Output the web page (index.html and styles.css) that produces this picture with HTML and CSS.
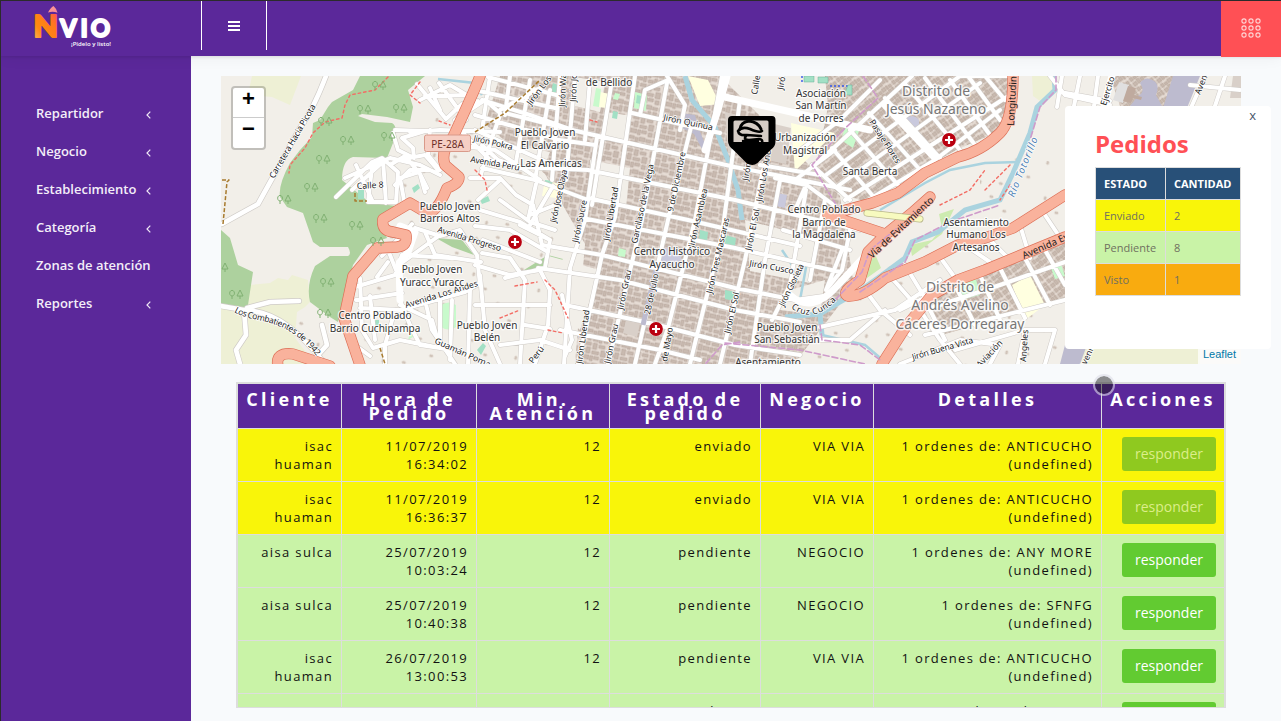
FILE: index.html
```html
<!DOCTYPE html>
<html lang="es">
<head>
<meta charset="utf-8">
<title>NVIO</title>
<link rel="stylesheet" href="styles.css">
</head>
<body>
<div class="app">
  <header class="topbar">
    <a class="brand">
      <svg class="logo" width="84" height="46" viewBox="32 4 84 46">
        <defs>
          <linearGradient id="ng" x1="0" y1="1" x2="1" y2="0"><stop offset="0" stop-color="#ffb56b"/><stop offset=".3" stop-color="#ff8a10"/><stop offset=".65" stop-color="#ff7a1c"/><stop offset="1" stop-color="#f9476b"/></linearGradient>
          <linearGradient id="ag" x1="0" y1="0" x2="1" y2="1"><stop offset="0" stop-color="#ff9a8c"/><stop offset="1" stop-color="#f5899f"/></linearGradient>
        </defs>
        <path d="M48 12.500Q50.500 7.500 53.500 6Q56.500 8.500 57.500 12.800Q53 10.800 48 12.500Z" fill="url(#ag)"/>
        <text class="logo-n" x="33.500" y="36.500" textLength="24.500" lengthAdjust="spacingAndGlyphs" fill="url(#ng)" stroke="url(#ng)">N</text>
        <text class="logo-vio" x="60 80.500 90.800" y="36.700">VIO</text>
        <text class="logo-tag" x="71" y="46" textLength="40" lengthAdjust="spacingAndGlyphs">¡Pídelo y listo!</text>
      </svg>
    </a>
    <button class="menu-btn" aria-label="Menu"><i></i><i></i><i></i></button>
    <button class="apps-btn" aria-label="Apps">
      <svg width="20" height="20" viewBox="0 0 20 20"><g fill="none" stroke="#ffd3d4" stroke-width="1.100"><circle cx="3" cy="3" r="2.100"/><circle cx="10" cy="3" r="2.100"/><circle cx="17" cy="3" r="2.100"/><circle cx="3" cy="10" r="2.100"/><circle cx="10" cy="10" r="2.100"/><circle cx="17" cy="10" r="2.100"/><circle cx="3" cy="17" r="2.100"/><circle cx="10" cy="17" r="2.100"/><circle cx="17" cy="17" r="2.100"/></g></svg>
    </button>
  </header>
  <div class="body">
    <nav class="sidebar">
      <a class="item">Repartidor<svg class="chev" viewBox="0 0 5 8"><path d="M4.300.6 1 4l3.300 3.400"/></svg></a>
      <a class="item">Negocio<svg class="chev" viewBox="0 0 5 8"><path d="M4.300.6 1 4l3.300 3.400"/></svg></a>
      <a class="item">Establecimiento<svg class="chev" viewBox="0 0 5 8"><path d="M4.300.6 1 4l3.300 3.400"/></svg></a>
      <a class="item">Categoría<svg class="chev" viewBox="0 0 5 8"><path d="M4.300.6 1 4l3.300 3.400"/></svg></a>
      <a class="item">Zonas de atención</a>
      <a class="item">Reportes<svg class="chev" viewBox="0 0 5 8"><path d="M4.300.6 1 4l3.300 3.400"/></svg></a>
    </nav>
    <main class="content">
      <section class="map">
        <svg class="tiles" viewBox="221 76 1020 288" width="1020" height="288">
          <defs>
            <pattern id="dense" width="29" height="33" patternUnits="userSpaceOnUse" patternTransform="rotate(12)">
              <rect width="29" height="33" fill="#e6dcd4"/>
              <path fill="#c9bab0" stroke="#b5a499" stroke-width=".6" d="M1 1h4v5H1zM6 1h5v3H6zM12 2h3v5h-3zM16 1h6v4h-6zM23 2h5v3h-5zM1 8h6v3H1zM8 6h3v6H8zM13 9h5v3h-5zM19 7h3v6h-3zM24 7h4v5h-4zM1 13h3v6H1zM6 14h6v3H6zM14 14h4v6h-4zM20 15h6v3h-6zM2 21h5v3H2zM8 19h4v6H8zM14 22h7v3h-7zM23 20h5v6h-5zM1 26h4v6H1zM6 27h6v4H6zM13 27h3v5h-3zM17 27h5v3h-5zM24 28h4v4h-4z"/>
            </pattern>
            <pattern id="sparse" width="67" height="53" patternUnits="userSpaceOnUse" patternTransform="rotate(14)">
              <path fill="#d6c9c0" stroke="#c6b7ac" stroke-width=".5" d="M3 3h3v2H3zM19 14h3v2h-3zM50 9h2v3h-2zM34 28h3v2h-3zM56 44h2v3h-2zM9 41h3v2H9z"/>
            </pattern>
            <pattern id="diag" width="21" height="12" patternUnits="userSpaceOnUse" patternTransform="rotate(-38)">
              <rect width="21" height="12" fill="#e6dcd4"/>
              <path fill="#c9bab0" stroke="#b3a297" stroke-width=".6" d="M1 1h3v4H1zM5 2h3v3H5zM9 1h4v4H9zM14 1h2v4h-2zM17 2h3v3h-3zM1 7h4v4H1zM6 6h3v5H6zM10 7h3v4h-3zM14 6h3v4h-3zM18 6h2v5h-2z"/>
            </pattern>
            <g id="tree"><path d="M-5 4v-3M-5 1a2.400 2.800 0 1 1 .1 0M3 4V1M3-5 0 1h6z" fill="none" stroke="#80b072" stroke-width="1"/></g>
            <g id="cross"><circle r="7.300" fill="#fff" opacity=".6"/><circle r="6.900" fill="#b9000f"/><path d="M-4 0h8M0-4v8" stroke="#fff" stroke-width="2.200"/></g>
            <path id="rural" d="M326 76Q313 110 300 128L258 204 222 224"/>
            <path id="hills" d="M336 197 372 162 382 158 398 172 396 202 368 202 372 168M345 178 390 158 420 165 440 175M352 190 385 160M356 165 372 200M383 160 386 203M390 165 405 156 420 174 425 192M395 185 410 170 430 170 437 173M393 133 398 150 414 158 413 148 402 138 425 131 395 130M398 160 425 155 438 170M404 200 400 178 419 172 427 188M417 84 446 119 462 104M420 100 450 85 475 100M430 88 440 110M425 96 470 95M439 83 466 120M455 120 478 101M410 132 440 130 500 132M430 130 428 155 440 170M470 110 485 100 500 113M460 130 490 160 520 168M455 145 495 150 540 180"/>
            <path id="hills2" d="M415 228 440 236 460 230 477 255 480 285M382 256 412 224M388 262 377 277M388 250 400 280M355 287 395 275 402 255 450 258M356 300 402 293M360 308 400 310 425 303 465 292 480 283M360 278 362 330 373 348 400 340 450 350M370 296 375 340M350 330 355 345 370 356M403 262 440 235M425 232 435 255 481 262M425 300 432 330 455 364M440 300 440 345M452 300 450 360M470 290 468 364M395 310 385 345 385 364M400 305 432 320 440 348 420 345 410 325 400 300"/>
            <path id="west" d="M482 145 498 160 520 167M470 178 500 178 516 195 533 205 542 245M478 200 500 180M480 210 520 222 550 240M475 226 510 230 548 252M483 240 540 262M482 253 510 258 525 280 520 364M475 265 510 275 540 270M475 305 550 305M480 275 485 330 500 364M505 278 545 268 550 240 520 225M540 270 550 290 548 325 535 364M525 325 550 329M500 345 540 340 570 350M562 295 565 310 572 340 565 356M555 230 530 222 500 200M560 203 530 215M553 186 530 225M536 184 528 220M482 100 530 115 572 130M475 115 560 140 595 145M490 76 482 130M510 76 505 115M530 80 515 168M550 90 535 180M500 110 540 88M475 90 555 108M475 130 560 168M488 77 560 96M482 168 535 180 588 200M480 178 488 150 500 115M560 76 552 180M575 76 566 180M590 80 585 140"/>
            <path id="city" d="M632 113 720 133M505 113 572 130 735 167 850 190M518 167 588 170 735 200 800 216 860 230M588 198 688 220 800 246M582 218 735 248 840 272M542 245 602 255 735 288 795 300 830 295M538 268 620 280 735 310 800 322M565 305 650 323 735 345 800 355M560 330 660 350 700 360M597 137 585 220 570 268 564 364M612 80 592 205M635 76 615 217 602 255 578 364M667 83 642 220 608 364M692 123 668 220 635 364M722 76 695 220 668 328 655 364M740 100 722 235 697 335 690 364M763 170 745 260 720 364M780 180 765 260 750 364M806 190 790 285 772 320M825 200 810 280M668 80 645 90 640 115M667 76 685 105 680 130M795 210 806 185 775 178M783 230 850 250M760 165 820 175M842 250 826 290M850 230 842 270 826 290"/>
            <path id="berta" d="M815 165 912 76M826 175 960 76M838 186 980 83M845 200 1010 95M860 205 935 160 1000 110M800 180 835 206M812 165 850 200M832 148 872 195M850 130 898 185M869 113 922 172M885 98 940 158M905 84 960 150M925 78 975 145M950 80 990 135M968 76 1000 120M985 76 1005 100M800 150 840 120 880 80M795 180 835 150"/>
            <path id="east" d="M890 276 920 310 940 340 960 364M900 310 940 290 1065 235M865 290 880 310 910 335M820 327 860 318 895 310 940 280M885 310 850 340 820 340M905 265 925 298M940 257 958 282M965 245 990 262M990 240 1010 260M1020 225 1030 258M1045 215 1057 233M925 300 945 340M955 285 975 325M980 275 1000 320M1000 268 1025 318M1025 258 1050 305M1045 250 1065 285M925 310 1000 285 1065 262M925 335 1065 300M955 350 1025 330 1055 330M1000 345 990 364M1025 330 1018 364M1055 330 1045 364M900 364 960 340 1000 345M960 76 1010 76M1050 76 1065 95 1110 105M1062 76 1057 107M1080 76 1074 106M1098 76 1094 106M1060 92 1110 101M1205 76 1190 110M1225 76 1215 106M1190 85 1240 90"/>
            <path id="farm" d="M221 306 244 310 246 335 236 350 240 364M247 308 270 302 299 301M238 311Q280 305 325 364M322 325 327 345 318 355"/>
            <path id="major" d="M480 76Q477 85 453 137 440 152 445 165L459 177Q459 184 447 188 437 213 427 213L410 203 383 219Q381 231 393 232L406 235Q408 246 397 247L377 248 353 276 344 318 360 365M278 366Q275 352 293 354L330 366M1013 76Q1013 120 1000 133 982 151 958 157L925 173 898 193 872 203 828 215 858 225 885 234M930 197 912 213 885 235 868 252 860 280Q840 293 848 296 863 297 885 278L925 262 958 245 985 238 1013 228 1065 195M882 364 905 328 932 295 958 280 985 270 1065 237"/>
          </defs>
          <rect x="221" y="76" width="1020" height="288" fill="#f2efe9"/>
          <path fill="#eef0d5" d="M252 76h49l-11 29-18-8-24-2zM250 285l20-2 8-5 10 2 4-5 16 5 2 22-5 5-8 5-2 26 20 26H221v-60zM1032 76h23l2 14-14 13-10-7zM1085 348h115v16h-120z"/>
          <path fill="#add19e" d="M360 76 353 90 332 102 328 107 320 120 313 123 312 137 300 150 290 163Q278 185 280 197L287 207 303 213 313 242 320 247 348 247Q352 254 348 256L330 256 315 266Q306 285 310 302L330 317 338 322 347 288 353 265 367 245 387 238 380 222 390 212 397 206 370 203 342 180Q342 160 353 157L387 158 393 143Q399 127 392 123L375 122 358 116 362 114 387 117 410 122 413 107 408 90 425 76zM221 230l9 8 8 27 15 7-5 33-8 8-19-8zM524 270l24-15 15 4-4 5-22 7zM436 238l26 2 12 15-22-8z"/>
          <path fill="url(#sparse)" d="M395 135 480 100 560 130 560 364H345L380 255 400 210zM780 300 1060 190 1060 364H780zM290 315l30 0 10 40-25 0zM980 145l85 20v50l-85 25z"/>
          <path fill="url(#dense)" d="M500 76h220l120 120 14 90-60 78H575l10-120-40-70-60-50z"/>
          <path fill="url(#diag)" d="M825 76h186v50l-55 24-90 52-30-10-20-25 12-60zM925 302l140-62v60l-120 34zM1110 76h70v30h-60z"/>
          <path fill="#f2efe9" d="M545 255l55 15-20 60-22-20zM575 77l30 5-5 30-25-6zM590 160l40 8-4 40-38-8zM745 220l70 18-5 45-60-12zM790 290l35-10-5 35-40-5zM555 278l38 8-6 20-30-6zM490 140l60 12-8 20-50-4zM606 112l26 4-4 25-26-4z"/>
          <path fill="#ffffe0" d="M791 123l44 10-40 38zM688 76l20 4 12 24-20 2zM1012 285l18-10 15 30-20 15zM545 180l15 4-4 14-14-2zM600 92l10 2-2 14-10-1z"/>
          <path fill="#c8facc" d="M635 92l12 3-1 16-12-3zM596 88l5 1-2 18-6-1zM615 93l5 1-2 6-5-1zM619 248l7 2-1 7-7-1zM846 125l13 6-6 17-12-8zM955 280l20-5 5 20-18 5zM1051 268l10-4 4 12-10 3zM441 305q8-5 15 0v22q-7 5-15 0zM408 340l8-5-4-8z"/>
          <path fill="#a2e0c5" d="M358 190h6v9h-6zM412 188l6-4 2 4-6 5zM373 320h6v6h-6zM553 83l5 2-2 8-5-2zM637 95l4 1-1 8-4-1zM700 230l8 2-1 9-8-2zM725 235l11 3-1 8-11-2zM613 111l5 1-1 7-5-1zM480 200l8-4 2 5-8 3zM725 290l10 2-1 9-9-2zM477 350l6-7 3 3-5 9zM545 180l8 1-2 5-7-1z"/>
          <path fill="#d9d0c9" d="M725 112l66 16-5 36-58-12zM626 320l14 4-3 13-14-4zM1233 76h8v22h-11z"/>
          <path fill="#e0dfdf" d="M1119 82l10 3-6 18-10-3z"/>
          <path fill="#bdbbcf" d="M681 113l14 2 4 14 6 15 2 5-5 0-8-15-10-5-5-3zM1173 76h27l-13 32h-24zM1065 345h22l-7 19h-20zM1130 106l8-10q8-4 2-13 6-8 14-2 6 4 2 14l6 11z"/>
          <path fill="#bfaa9e" d="M1128 86l8 2-2 7 8 2-1 3-8-2-2 5-8-2z"/>
          <path fill="#c9c9dd" d="M662 247l20 5-3 17-20-5zM777 193l10 2-2 13-9-2zM905 118q9-5 14 2l0 10-12 2z"/>
          <path fill="#cdebb0" d="M865 270l10-16 6 14-14 10zM910 245l22-5 10-12-3-14 15-5-12 25-30 22z"/>
          <path fill="none" stroke="#aad3df" stroke-width="5" d="M685 76 692 100 715 127 728 160 738 190 742 220M1054 76 1055 90 1037 107 1030 133 1013 173 1000 200 965 210 938 232 912 242 905 258 882 275 858 292 838 303 820 314 822 335M785 317 820 314"/>
          <path fill="none" stroke="#aad3df" stroke-width="2.500" d="M880 210 925 183 950 170 985 163 1018 162M807 262 800 300M782 250 792 265M438 79 475 83 482 95M412 132 450 131M822 335 865 345 885 362"/>
          <g fill="none" stroke-linejoin="round" stroke-linecap="round">
            <g stroke="#cfcbc7" stroke-width="5"><use href="#hills"/><use href="#hills2"/><use href="#west"/><use href="#city"/><use href="#berta"/><use href="#east"/></g>
            <g stroke="#fff" stroke-width="4"><use href="#hills"/><use href="#hills2"/><use href="#west"/><use href="#city"/><use href="#berta"/><use href="#east"/></g>
            <g stroke="#cfcbc7" stroke-width="6"><use href="#rural"/><use href="#farm"/></g>
            <g stroke="#fff" stroke-width="4.700"><use href="#rural"/><use href="#farm"/></g>
            <path stroke="#fff" stroke-width="7" d="M725 97 870 130M727 76 718 110 705 150M400 226 415 232 408 252 399 263 400 300M885 105 935 158M790 295Q812 315 838 285L875 245M1112 76 1104 106"/>
            <use href="#major" stroke="#dc6e55" stroke-width="11.300"/><use href="#major" stroke="#f9b29c" stroke-width="10"/>
            <path stroke="#b8b68a" stroke-width="7" d="M867 213 920 219"/><path stroke="#f7fabf" stroke-width="5.500" d="M867 213 920 219"/>
            <path stroke="#bdbbcf" stroke-width="5" stroke-linecap="butt" d="M656 270 643 325"/>
            <g stroke="#cf9bcb" stroke-width="1.600" stroke-dasharray="6 3"><path d="M863 76 878 98 840 133 812 165 838 208 855 212M700 370 722 345 740 342M725 343 800 350 865 364M835 300 862 272 870 250 905 222 928 200M860 292 905 262 915 240 950 222 1000 205M1056 76 1056 90 1040 107 1030 140M820 325 822 340 860 345 880 360"/></g>
            <path stroke="#f36d65" stroke-width="1.400" stroke-dasharray="2.500 3" d="M388 77 375 90 350 95 345 105 342 118 325 122 313 133 305 148 290 165 289 173M420 82 410 95 420 103M439 121 450 125M545 280 555 290 562 305 568 318M515 286 537 282M500 318 520 310M548 330 563 333M475 170 485 180 487 190M940 205 970 190 985 170M985 190 1010 165M590 120 597 122M1010 185 1000 200"/>
            <path stroke="#a87b2f" stroke-width="1.500" stroke-dasharray="4 2" stroke-linecap="butt" d="M223 224 227 182 229 180 222 180M475 132 505 113 540 80M355 193v8h12M380 348 385 364"/>
            <path stroke="#3456e8" stroke-width="1.400" stroke-dasharray="2 2" stroke-linecap="butt" d="M802 76v6M830 86h22"/>
          </g>
          <path fill="#a2e0c5" stroke="#68b39b" stroke-width=".5" d="M804 76h10v6h-10zM818 77h10v6h-10zM848 85h4v10h-8z"/>
          <g><use href="#tree" x="380" y="86"/><use href="#tree" x="365" y="110"/><use href="#tree" x="401" y="109"/><use href="#tree" x="326" y="122"/><use href="#tree" x="348" y="141"/><use href="#tree" x="389" y="137"/><use href="#tree" x="324" y="160"/><use href="#tree" x="312" y="188"/><use href="#tree" x="285" y="200"/><use href="#tree" x="321" y="219"/><use href="#tree" x="357" y="226"/><use href="#tree" x="378" y="242"/><use href="#tree" x="328" y="283"/><use href="#tree" x="325" y="314"/><use href="#tree" x="237" y="295"/><use href="#tree" x="222" y="268"/></g>
          <g class="road-label">
            <text transform="translate(274 179) rotate(-60)" textLength="84">Carretera Hacia Picota</text>
            <text transform="translate(357 189) rotate(-3)">Calle 8</text>
            <path id="lc" d="M234 312C255 325 285 314 318 358" fill="none" stroke="none"/><text><textPath href="#lc" textLength="96">Los Combatientes de 1942</textPath></text>
            <text transform="translate(473 141) rotate(13)" textLength="40">Jirón Pokra</text>
            <text transform="translate(470 162) rotate(10)" textLength="50">Avenida Perú</text>
            <text transform="translate(437 232) rotate(17)" textLength="66">Avenida Progreso</text>
            <text transform="translate(406 308) rotate(-17)">Avenida Los Andes</text>
            <text transform="translate(434 343) rotate(24)">Guamán Poma</text>
            <text transform="translate(531 106) rotate(-53)">Jirón Los</text>
            <text transform="translate(565 107) rotate(-88)">Jirón Wari</text><text transform="translate(576 102) rotate(-88)">Jirón José</text>
            <text transform="translate(663 120) rotate(12)">Jirón Quinua</text>
            <text transform="translate(556 223) rotate(-78)" textLength="54">Jirón Jose Olaya</text>
            <text transform="translate(578 243) rotate(-78)">Jirón Sucre</text>
            <text transform="translate(609 241) rotate(-80)">Jirón Libertad</text>
            <text transform="translate(637 244) rotate(-78)">Garcilaso de la Vega</text>
            <text transform="translate(673 212) rotate(-78)">9 de Diciembre</text>
            <text transform="translate(694 248) rotate(-77)">Jirón Asamblea</text>
            <text transform="translate(712 294) rotate(-77)">Jirón Tres Mascaras</text>
            <text transform="translate(623 310) rotate(-78)">Jirón Grau</text><text transform="translate(610 364) rotate(-78)">Jirón Grau</text>
            <text transform="translate(582 364) rotate(-82)">Jirón Libertad</text><text transform="translate(650 315) rotate(-78)">28 de Julio</text>
            <text transform="translate(667 362) rotate(-80)">de Mayo</text><text transform="translate(730 334) rotate(-77)">Jirón El Sol</text><text transform="translate(751 251) rotate(-78)">Jirón El Sol</text>
            <text transform="translate(533 364) rotate(-53)">Perú</text>
            <text transform="translate(748 181) rotate(-80)">Jirón</text><text transform="translate(762 202) rotate(-80)">Jirón Los Andes</text><text transform="translate(757 95) rotate(-80)">Calle</text><text transform="translate(783 90) rotate(-80)">Jirón</text>
            <text transform="translate(749 266) rotate(10)">Jirón Cusco</text><text transform="translate(784 307) rotate(-64)" textLength="46">Jirón Glorieta</text><path id="cc" d="M791 308Q815 326 840 296" fill="none" stroke="none"/><text><textPath href="#cc" textLength="51">Cruz Cunca</textPath></text>
            <text transform="translate(869 122) rotate(57)" textLength="50">Pasaje Flores</text><text class="big" transform="translate(872 259) rotate(-43)">Vía de Evitamiento</text>
            <text transform="translate(913 360) rotate(-16)" textLength="63">Jirón Buena Vista</text>
            <text class="big" transform="translate(1024 259) rotate(-24)">Avenida Evitamiento</text>
            <text class="big" transform="translate(1014 126) rotate(-87)">Longitudinal</text><text transform="translate(1106 106) rotate(-73)">Ejercito</text><text transform="translate(1200 95) rotate(-68)">Avenida</text>
            <text transform="translate(1026 362) rotate(-86)">Angeles</text><text transform="translate(980 368) rotate(-47)">Aviación</text><text transform="translate(1084 370) rotate(-65)">Avenida</text>
            <text class="river" transform="translate(1014 198) rotate(-68)" textLength="64">Río Totorillo</text>
          </g>
          <g class="place">
            <text x="609" y="86">de Bellido</text><text x="545" y="136">Pueblo Joven</text><text x="545" y="149">El Calvario</text><text x="551" y="167">Las Americas</text>
            <text x="450" y="210">Pueblo Joven</text><text x="450" y="222">Barrios Altos</text><text x="432" y="273">Pueblo Joven</text><text x="432" y="286">Yuracc Yuracc</text>
            <text x="375" y="319">Centro Poblado</text><text x="375" y="332">Barrio Cuchipampa</text><text x="487" y="329">Pueblo Joven</text><text x="487" y="341">Belén</text>
            <text x="672" y="255">Centro Histórico</text><text x="672" y="268">Ayacucho</text><text x="821" y="97">Asociación</text><text x="821" y="109">San Martín</text><text x="821" y="122">de Porres</text>
            <text x="805" y="141">Urbanización</text><text x="805" y="154">Magistral</text><text x="870" y="175">Santa Berta</text><text x="824" y="213">Centro Poblado</text><text x="824" y="226">Barrio de</text><text x="824" y="238">la Magdalena</text>
            <text x="787" y="331">Pueblo Joven</text><text x="787" y="343">San Sebastián</text><text x="768" y="366">Asentamiento</text><text x="976" y="226">Asentamiento</text><text x="976" y="238">Humano Los</text><text x="976" y="251">Artesanos</text>
          </g>
          <g class="district"><text x="936" y="96">Distrito de</text><text x="936" y="114">Jesús Nazareno</text><text x="960" y="292">Distrito de</text><text x="960" y="310">Andrés Avelino</text><text x="960" y="329">Cáceres Dorregaray</text></g>
          <rect x="424.500" y="135" width="46" height="16.500" rx="2" fill="#f6cfc4" stroke="#d99a8a"/><text class="shield" x="447.500" y="147.500">PE-28A</text>
          <use href="#cross" x="515" y="242"/><use href="#cross" x="656" y="329"/><use href="#cross" x="949" y="140"/>
          <path d="M732 116h40q3.500 0 3.500 4v21q0 6-5 9l-13 13q-5 4-11 0l-13-13q-5.500-4-5.500-9v-21q0-4 4-4z"/>
          <path fill="#d6cdc6" d="M735 120.500h32q1.500 0 1.500 1.500v20h-35v-20q0-1.500 1.500-1.500z"/>
          <g fill="none" stroke="#000" stroke-linecap="round">
            <path stroke-width="3" d="M740 129q1-7 9-8 9 1 12 8"/>
            <path stroke-width="2.600" d="M738 131q4-5 12-2 9 4 12 2M738 131q1 5 9 4l14 1M746 136q-3 4 3 4l10-1q4 0 3 4"/>
            <path stroke-width="2.500" d="M743 141h15"/>
          </g>
        </svg>
        <div class="zoom"><a>+</a><a>−</a></div>
        <span class="credit">Leaflet</span>
      </section>
      <section class="orders">
        <table>
          <colgroup><col class="c1"><col class="c2"><col class="c3"><col class="c4"><col class="c5"><col class="c6"><col class="c7"></colgroup>
          <thead><tr><th>Cliente</th><th>Hora de Pedido</th><th>Min. Atención</th><th>Estado de pedido</th><th>Negocio</th><th>Detalles</th><th>Acciones</th></tr></thead>
          <tbody>
            <tr class="sent"><td>isac huaman</td><td>11/07/2019 16:34:02</td><td>12</td><td>enviado</td><td>VIA VIA</td><td>1 ordenes de: ANTICUCHO (undefined)</td><td><button class="reply" disabled>responder</button></td></tr>
            <tr class="sent"><td>isac huaman</td><td>11/07/2019 16:36:37</td><td>12</td><td>enviado</td><td>VIA VIA</td><td>1 ordenes de: ANTICUCHO (undefined)</td><td><button class="reply" disabled>responder</button></td></tr>
            <tr><td>aisa sulca</td><td>25/07/2019 10:03:24</td><td>12</td><td>pendiente</td><td>NEGOCIO</td><td>1 ordenes de: ANY MORE (undefined)</td><td><button class="reply">responder</button></td></tr>
            <tr><td>aisa sulca</td><td>25/07/2019 10:40:38</td><td>12</td><td>pendiente</td><td>NEGOCIO</td><td>1 ordenes de: SFNFG (undefined)</td><td><button class="reply">responder</button></td></tr>
            <tr><td>isac huaman</td><td>26/07/2019 13:00:53</td><td>12</td><td>pendiente</td><td>VIA VIA</td><td>1 ordenes de: ANTICUCHO (undefined)</td><td><button class="reply">responder</button></td></tr>
            <tr><td></td><td></td><td></td><td>pendiente</td><td></td><td>1 ordenes de: SFNFG (undefined)</td><td><button class="reply">responder</button></td></tr>
          </tbody>
        </table>
      </section>
    </main>
  </div>
  <aside class="panel">
    <span class="close">x</span>
    <h2>Pedidos</h2>
    <table class="summary">
      <thead><tr><th>ESTADO</th><th>CANTIDAD</th></tr></thead>
      <tbody><tr class="s-sent"><td>Enviado</td><td>2</td></tr><tr class="s-pending"><td>Pendiente</td><td>8</td></tr><tr class="s-seen"><td>Visto</td><td>1</td></tr></tbody>
    </table>
  </aside>
  <div class="pointer"></div>
</div>
</body>
</html>
```
FILE: styles.css
```css
* { box-sizing: border-box; }
body { margin: 0; font-family: "Open Sans", sans-serif; background: #f8fafc; overflow: hidden; }
button { font: inherit; border: 0; background: none; padding: 0; }
.app { position: relative; height: 721px; border-top: 1px solid #2b2b2b; border-left: 1px solid #2b2b2b; display: flex; flex-direction: column; overflow: hidden; }
.topbar { height: 55px; flex: none; display: flex; background: #5b289a; box-shadow: 0 1px 15px rgba(0,0,0,.06), 0 1px 3px rgba(0,0,0,.1); z-index: 1; }
.brand { width: 200px; padding: 3px 0 0 31px; }
.logo { display: block; }
.logo-n { font: 900 30px Lato, sans-serif; stroke-width: 2px; stroke-linejoin: round; }
.logo-vio { font: 900 24px Lato, sans-serif; fill: #fff; stroke: #fff; stroke-width: 1.8px; stroke-linejoin: round; }
.logo-tag { font: 600 6px "Open Sans", sans-serif; fill: #fff; }
.menu-btn { width: 66px; height: 49px; border: solid #fff; border-width: 0 1px; display: flex; flex-direction: column; align-items: center; justify-content: center; gap: 2px; padding-top: 1px; }
.menu-btn i { width: 12px; height: 2px; background: #fff; }
.apps-btn { margin-left: auto; width: 60px; height: 56px; padding-bottom: 2px; background: #ff5055; display: flex; align-items: center; justify-content: center; }
.body { flex: 1; display: flex; min-height: 0; }
.sidebar { width: 190px; background: #5b289a; padding: 38px 40px 0 35px; }
.item { display: flex; align-items: center; justify-content: space-between; height: 38px; font-size: 13px; font-weight: 600; color: #f3eef8; white-space: nowrap; }
.chev { width: 5px; height: 8px; margin-top: 3px; fill: none; stroke: #eee7f5; stroke-width: 1.2; flex: none; }
.content { flex: 1; padding: 20px 40px 0 30px; display: flex; flex-direction: column; gap: 18px; }
.map { position: relative; width: 1020px; height: 288px; flex: none; overflow: hidden; }
.tiles { display: block; }
.tiles text { font-family: "Noto Sans", sans-serif; paint-order: stroke; stroke-linejoin: round; }
.road-label text { font-size: 8.6px; fill: #1c1c1c; stroke: #fff; stroke-width: 1.5px; }
.road-label .big { font-size: 9.8px; stroke: #f9b29c; }
.road-label .river { font-size: 10px; fill: #4d80b3; font-style: italic; }
.place text { font-size: 10px; fill: #333; stroke: #fff; stroke-opacity: .8; stroke-width: 2.5px; text-anchor: middle; }
.district text { font-size: 13.9px; fill: #777; stroke: #fff; stroke-opacity: .8; stroke-width: 3px; text-anchor: middle; }
.tiles .shield { font-size: 10px; fill: #6d3028; text-anchor: middle; }
.zoom { position: absolute; left: 10px; top: 10px; width: 35px; height: 64px; border: 2px solid rgba(0,0,0,.2); background-clip: padding-box; border-radius: 4px; background-color: #fff; }
.zoom a { display: block; height: 30px; font: bold 22px/22px "Liberation Sans", sans-serif; text-align: center; color: #000; }
.zoom a:first-child { border-bottom: 1px solid #ccc; }
.credit { position: absolute; right: 0; bottom: 0; width: 43px; height: 16px; padding-left: 5px; font: 11px/13px "Liberation Sans", sans-serif; color: #0078a8; background: rgba(255,255,255,.7); }
.orders { margin-left: 15px; width: 990px; height: 326px; border: 2px solid #ddd; border-bottom-width: 1px; overflow: hidden; }
.orders table { width: 986px; table-layout: fixed; border-collapse: separate; border-spacing: 0; letter-spacing: 1.35px; }
.c1 { width: 104px; } .c2 { width: 135px; } .c3 { width: 133px; } .c4 { width: 151px; } .c5 { width: 113px; } .c6 { width: 228px; } .c7 { width: 122px; }
.orders th { height: 45px; padding: 8px 6px 0; background: #5b289a; color: #fff; font-size: 18px; line-height: 14px; letter-spacing: 3.3px; vertical-align: top; border: solid #ddd; border-width: 0 1px 1px 0; }
.orders td { height: 53px; padding: 8px 8px 0; background: #c9f3a7; color: #111; font-size: 13px; line-height: 18px; text-align: right; vertical-align: top; border: solid #ddd; border-width: 0 1px 1px 0; }
.orders .sent td { background: #f9f509; }
.orders th:last-child, .orders td:last-child { border-right: 0; }
.reply { width: 94px; height: 34px; border-radius: 3px; background: #62cb31; color: #fff; font-size: 14px; letter-spacing: 0; }
.reply:disabled { background: #8fc91f; color: #dcee8a; }
.panel { position: absolute; left: 1064px; top: 105px; width: 206px; height: 243px; padding: 23px 30px 0; background: #fff; border-radius: 4px; z-index: 2; }
.close { position: absolute; right: 15px; top: 1px; font-size: 13px; line-height: 16px; color: #47566b; }
.panel h2 { margin: 0; font-size: 24px; line-height: 29px; height: 38px; color: #ff5055; }
.summary { width: 146px; table-layout: fixed; border-collapse: collapse; font-size: 11px; border: 1px solid #ddd; }
.summary th, .summary td { height: 32px; padding: 0 8px; text-align: left; border: 1px solid #ddd; white-space: nowrap; color: #6f7060; }
.summary th:first-child { width: 70px; }
.summary th { background: #285078; color: #fff; }
.s-sent td { background: #f9f509; }
.s-pending td { background: #c9f3a7; }
.s-seen td { background: #f9ab0f; }
.pointer { position: absolute; left: 1092px; top: 373px; width: 22px; height: 22px; border-radius: 50%; background: rgba(20,20,20,.48); background-clip: padding-box; border: 2px solid rgba(220,220,230,.6); z-index: 3; }
```
